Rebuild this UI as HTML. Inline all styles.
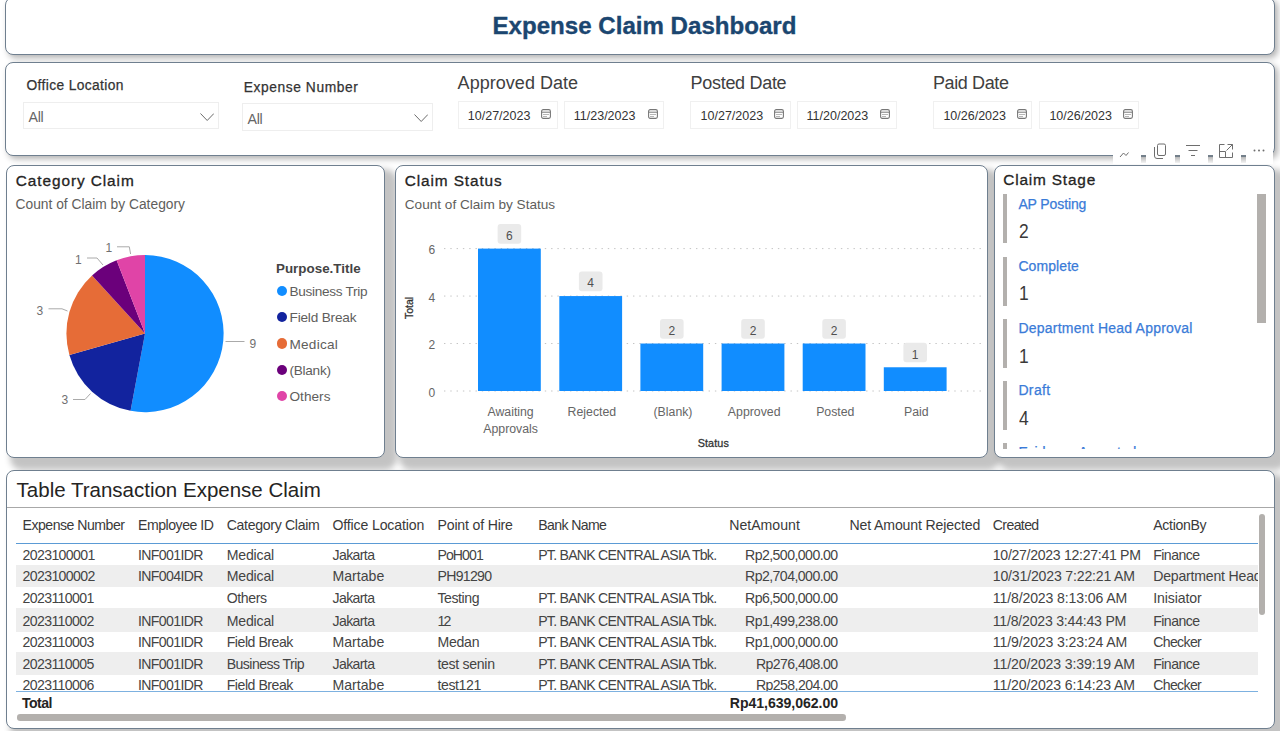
<!DOCTYPE html>
<html><head><meta charset="utf-8">
<style>
*{box-sizing:border-box;margin:0;padding:0}
html,body{width:1280px;height:731px;overflow:hidden;background:#fff;font-family:"Liberation Sans",sans-serif;position:relative}
.p{position:absolute;background:#fff;border:1.5px solid #6f7f8f;border-radius:8px;box-shadow:8px 8px 6px 4px rgba(0,0,0,0.235)}
.t{position:absolute;white-space:nowrap;line-height:1}
</style></head><body>
<div class="p" style="left:4.50px;top:-3.00px;width:1270.05px;height:58.15px;box-shadow:3px 3px 6px rgba(0,0,0,0.30)"></div>
<div class="p" style="left:4.70px;top:62.25px;width:1269.85px;height:94.05px;box-shadow:3px 3px 6px rgba(0,0,0,0.30)"></div>
<div class="p" style="left:5.70px;top:164.55px;width:379.70px;height:293.40px;"></div>
<div class="p" style="left:394.70px;top:164.55px;width:593.50px;height:293.40px;"></div>
<div class="p" style="left:993.70px;top:164.55px;width:281.60px;height:293.40px;"></div>
<div class="p" style="left:5.90px;top:470.15px;width:1269.50px;height:259.30px;"></div>
<div class="t" style="left:492.50px;top:14.00px;font-size:24.1px;color:#1b4670;font-weight:bold;-webkit-text-stroke:0.35px #1b4670;">Expense Claim Dashboard</div>
<div class="t" style="left:26.50px;top:79.00px;font-size:13.8px;color:#333333;font-weight:normal;-webkit-text-stroke:0.25px #333333;letter-spacing:0.371px;">Office Location</div>
<div style="position:absolute;left:23.00px;top:101.60px;width:196.40px;height:27.40px;border:1px solid #eeeeee"></div>
<div class="t" style="left:28.60px;top:110.00px;font-size:14.2px;color:#666666;font-weight:normal;letter-spacing:-0.391px;">All</div>
<div class="t" style="left:243.80px;top:81.00px;font-size:13.8px;color:#333333;font-weight:normal;-webkit-text-stroke:0.25px #333333;letter-spacing:0.568px;">Expense Number</div>
<div style="position:absolute;left:241.60px;top:103.40px;width:191.80px;height:27.20px;border:1px solid #eeeeee"></div>
<div class="t" style="left:247.60px;top:112.00px;font-size:14.2px;color:#666666;font-weight:normal;letter-spacing:-0.391px;">All</div>
<svg style="position:absolute;left:199.8px;top:112.6px" width="14.399999999999977" height="8.0" viewBox="0 0 14.399999999999977 8.0"><path d="M0.5 0.5 L7.199999999999989 7.5 L13.899999999999977 0.5" fill="none" stroke="#6a6a6a" stroke-width="1"/></svg>
<svg style="position:absolute;left:413.8px;top:113.8px" width="14.399999999999977" height="8.0" viewBox="0 0 14.399999999999977 8.0"><path d="M0.5 0.5 L7.199999999999989 7.5 L13.899999999999977 0.5" fill="none" stroke="#6a6a6a" stroke-width="1"/></svg>
<div class="t" style="left:457.60px;top:74.00px;font-size:18px;color:#404040;font-weight:normal;letter-spacing:0.035px;">Approved Date</div>
<div class="t" style="left:690.60px;top:74.00px;font-size:18px;color:#404040;font-weight:normal;letter-spacing:-0.306px;">Posted Date</div>
<div class="t" style="left:933.00px;top:74.00px;font-size:18px;color:#404040;font-weight:normal;letter-spacing:-0.381px;">Paid Date</div>
<div style="position:absolute;left:457.50px;top:101.00px;width:100.30px;height:28.20px;border:1px solid #f0f0f0"></div>
<div class="t" style="left:467.80px;top:110.00px;font-size:12.5px;color:#333333;font-weight:normal;">10/27/2023</div>
<svg style="position:absolute;left:541.3px;top:108.6px" width="10" height="10" viewBox="0 0 10 10"><rect x="0.6" y="0.6" width="8.8" height="8.8" rx="1.6" fill="none" stroke="#777" stroke-width="1.1"/><line x1="0.6" y1="3.2" x2="9.4" y2="3.2" stroke="#777" stroke-width="1"/><rect x="2.4" y="5" width="1.2" height="1" fill="#888"/><rect x="4.4" y="5" width="1.2" height="1" fill="#888"/><rect x="6.4" y="5" width="1.2" height="1" fill="#888"/><rect x="2.4" y="7" width="1.2" height="1" fill="#888"/><rect x="4.4" y="7" width="1.2" height="1" fill="#888"/></svg>
<div style="position:absolute;left:564.00px;top:101.00px;width:99.80px;height:28.20px;border:1px solid #f0f0f0"></div>
<div class="t" style="left:573.80px;top:110.00px;font-size:12.5px;color:#333333;font-weight:normal;">11/23/2023</div>
<svg style="position:absolute;left:647.6px;top:108.6px" width="10" height="10" viewBox="0 0 10 10"><rect x="0.6" y="0.6" width="8.8" height="8.8" rx="1.6" fill="none" stroke="#777" stroke-width="1.1"/><line x1="0.6" y1="3.2" x2="9.4" y2="3.2" stroke="#777" stroke-width="1"/><rect x="2.4" y="5" width="1.2" height="1" fill="#888"/><rect x="4.4" y="5" width="1.2" height="1" fill="#888"/><rect x="6.4" y="5" width="1.2" height="1" fill="#888"/><rect x="2.4" y="7" width="1.2" height="1" fill="#888"/><rect x="4.4" y="7" width="1.2" height="1" fill="#888"/></svg>
<div style="position:absolute;left:690.30px;top:101.00px;width:100.30px;height:28.20px;border:1px solid #f0f0f0"></div>
<div class="t" style="left:700.60px;top:110.00px;font-size:12.5px;color:#333333;font-weight:normal;">10/27/2023</div>
<svg style="position:absolute;left:774px;top:108.6px" width="10" height="10" viewBox="0 0 10 10"><rect x="0.6" y="0.6" width="8.8" height="8.8" rx="1.6" fill="none" stroke="#777" stroke-width="1.1"/><line x1="0.6" y1="3.2" x2="9.4" y2="3.2" stroke="#777" stroke-width="1"/><rect x="2.4" y="5" width="1.2" height="1" fill="#888"/><rect x="4.4" y="5" width="1.2" height="1" fill="#888"/><rect x="6.4" y="5" width="1.2" height="1" fill="#888"/><rect x="2.4" y="7" width="1.2" height="1" fill="#888"/><rect x="4.4" y="7" width="1.2" height="1" fill="#888"/></svg>
<div style="position:absolute;left:796.60px;top:101.00px;width:100.40px;height:28.20px;border:1px solid #f0f0f0"></div>
<div class="t" style="left:806.60px;top:110.00px;font-size:12.5px;color:#333333;font-weight:normal;">11/20/2023</div>
<svg style="position:absolute;left:880px;top:108.6px" width="10" height="10" viewBox="0 0 10 10"><rect x="0.6" y="0.6" width="8.8" height="8.8" rx="1.6" fill="none" stroke="#777" stroke-width="1.1"/><line x1="0.6" y1="3.2" x2="9.4" y2="3.2" stroke="#777" stroke-width="1"/><rect x="2.4" y="5" width="1.2" height="1" fill="#888"/><rect x="4.4" y="5" width="1.2" height="1" fill="#888"/><rect x="6.4" y="5" width="1.2" height="1" fill="#888"/><rect x="2.4" y="7" width="1.2" height="1" fill="#888"/><rect x="4.4" y="7" width="1.2" height="1" fill="#888"/></svg>
<div style="position:absolute;left:932.80px;top:101.00px;width:99.70px;height:28.20px;border:1px solid #f0f0f0"></div>
<div class="t" style="left:943.40px;top:110.00px;font-size:12.5px;color:#333333;font-weight:normal;">10/26/2023</div>
<svg style="position:absolute;left:1017px;top:108.6px" width="10" height="10" viewBox="0 0 10 10"><rect x="0.6" y="0.6" width="8.8" height="8.8" rx="1.6" fill="none" stroke="#777" stroke-width="1.1"/><line x1="0.6" y1="3.2" x2="9.4" y2="3.2" stroke="#777" stroke-width="1"/><rect x="2.4" y="5" width="1.2" height="1" fill="#888"/><rect x="4.4" y="5" width="1.2" height="1" fill="#888"/><rect x="6.4" y="5" width="1.2" height="1" fill="#888"/><rect x="2.4" y="7" width="1.2" height="1" fill="#888"/><rect x="4.4" y="7" width="1.2" height="1" fill="#888"/></svg>
<div style="position:absolute;left:1039.40px;top:101.00px;width:100.00px;height:28.20px;border:1px solid #f0f0f0"></div>
<div class="t" style="left:1049.40px;top:110.00px;font-size:12.5px;color:#333333;font-weight:normal;">10/26/2023</div>
<svg style="position:absolute;left:1123px;top:108.6px" width="10" height="10" viewBox="0 0 10 10"><rect x="0.6" y="0.6" width="8.8" height="8.8" rx="1.6" fill="none" stroke="#777" stroke-width="1.1"/><line x1="0.6" y1="3.2" x2="9.4" y2="3.2" stroke="#777" stroke-width="1"/><rect x="2.4" y="5" width="1.2" height="1" fill="#888"/><rect x="4.4" y="5" width="1.2" height="1" fill="#888"/><rect x="6.4" y="5" width="1.2" height="1" fill="#888"/><rect x="2.4" y="7" width="1.2" height="1" fill="#888"/><rect x="4.4" y="7" width="1.2" height="1" fill="#888"/></svg>
<div style="position:absolute;left:1112.50px;top:138.00px;width:160.70px;height:26.40px;background:#fff"></div>
<div style="position:absolute;left:1141.00px;top:154.80px;width:5.00px;height:2.00px;background:#737f8a"></div>
<div style="position:absolute;left:1141.00px;top:156.80px;width:5.00px;height:6.00px;background:linear-gradient(#b8b8b8,#f4f4f4)"></div>
<div style="position:absolute;left:1174.50px;top:154.80px;width:5.00px;height:2.00px;background:#737f8a"></div>
<div style="position:absolute;left:1174.50px;top:156.80px;width:5.00px;height:6.00px;background:linear-gradient(#b8b8b8,#f4f4f4)"></div>
<div style="position:absolute;left:1207.60px;top:154.80px;width:5.00px;height:2.00px;background:#737f8a"></div>
<div style="position:absolute;left:1207.60px;top:156.80px;width:5.00px;height:6.00px;background:linear-gradient(#b8b8b8,#f4f4f4)"></div>
<div style="position:absolute;left:1240.80px;top:154.80px;width:5.00px;height:2.00px;background:#737f8a"></div>
<div style="position:absolute;left:1240.80px;top:156.80px;width:5.00px;height:6.00px;background:linear-gradient(#b8b8b8,#f4f4f4)"></div>
<svg style="position:absolute;left:1112px;top:140px" width="161" height="22" viewBox="0 0 161 22"><g fill="none" stroke="#6e6e6e" stroke-width="1"><path d="M8 17 L11.5 13 L14 15.5 L16.5 12.5"/><rect x="45.5" y="4" width="8" height="11.5" rx="1.5"/><path d="M42.5 7 V16 Q42.5 18.5 45 18.5 H51"/><path d="M74 5.5 H88 M76.5 10.5 H85.5 M79 15.5 H83"/><path d="M112.5 4.5 H107.5 V17.5 H120.5 V12.5"/><path d="M107.5 11.5 H113.5 V17.5"/><path d="M115.5 4.5 H120.5 V9.5 M120.5 4.5 L114.5 10.5"/></g><circle cx="142.5" cy="10.5" r="1" fill="#6e6e6e"/><circle cx="147" cy="10.5" r="1" fill="#6e6e6e"/><circle cx="151.5" cy="10.5" r="1" fill="#6e6e6e"/></svg>
<div class="t" style="left:15.80px;top:173.00px;font-size:15.4px;color:#252423;font-weight:normal;-webkit-text-stroke:0.3px #252423;letter-spacing:0.914px;">Category Claim</div>
<div class="t" style="left:15.50px;top:198.00px;font-size:13.8px;color:#605e5c;font-weight:normal;">Count of Claim by Category</div>
<svg style="position:absolute;left:0;top:0" width="400" height="460" viewBox="0 0 400 460"><path d="M145 333.6 L145.00 255.00 A78.6 78.6 0 1 1 130.56 410.86 Z" fill="#118DFF"/><path d="M145 333.6 L130.56 410.86 A78.6 78.6 0 0 1 69.40 355.11 Z" fill="#12239E"/><path d="M145 333.6 L69.40 355.11 A78.6 78.6 0 0 1 92.05 275.51 Z" fill="#E66C37"/><path d="M145 333.6 L92.05 275.51 A78.6 78.6 0 0 1 116.61 260.31 Z" fill="#6B007B"/><path d="M145 333.6 L116.61 260.31 A78.6 78.6 0 0 1 145.00 255.00 Z" fill="#E044A7"/><g fill="none" stroke="#aaaaaa" stroke-width="1"><path d="M225.5 341.5 H244.5"/><path d="M73 399.5 H85 L90.5 393.5"/><path d="M48.5 308.8 H62 L67.5 311"/><path d="M87 258 H97 L103 265"/><path d="M117 246.8 H129.3 L130.6 254"/></g></svg>
<div class="t" style="left:249.50px;top:338.00px;font-size:12px;color:#707070;font-weight:normal;">9</div>
<div class="t" style="left:61.50px;top:394.00px;font-size:12px;color:#707070;font-weight:normal;">3</div>
<div class="t" style="left:36.50px;top:305.00px;font-size:12px;color:#707070;font-weight:normal;">3</div>
<div class="t" style="left:75.00px;top:254.00px;font-size:12px;color:#707070;font-weight:normal;">1</div>
<div class="t" style="left:105.50px;top:242.00px;font-size:12px;color:#707070;font-weight:normal;">1</div>
<div class="t" style="left:276.00px;top:262.00px;font-size:13.4px;color:#444444;font-weight:bold;">Purpose.Title</div>
<div style="position:absolute;left:276.5px;top:285.80px;width:10.4px;height:10.4px;border-radius:50%;background:#118DFF"></div>
<div class="t" style="left:289.50px;top:285.00px;font-size:13.6px;color:#605e5c;font-weight:normal;letter-spacing:-0.303px;">Business Trip</div>
<div style="position:absolute;left:276.5px;top:312.10px;width:10.4px;height:10.4px;border-radius:50%;background:#12239E"></div>
<div class="t" style="left:289.50px;top:311.00px;font-size:13.6px;color:#605e5c;font-weight:normal;letter-spacing:-0.178px;">Field Break</div>
<div style="position:absolute;left:276.5px;top:338.40px;width:10.4px;height:10.4px;border-radius:50%;background:#E66C37"></div>
<div class="t" style="left:289.50px;top:338.00px;font-size:13.6px;color:#605e5c;font-weight:normal;letter-spacing:0.239px;">Medical</div>
<div style="position:absolute;left:276.5px;top:364.70px;width:10.4px;height:10.4px;border-radius:50%;background:#6B007B"></div>
<div class="t" style="left:289.50px;top:364.00px;font-size:13.6px;color:#605e5c;font-weight:normal;letter-spacing:-0.263px;">(Blank)</div>
<div style="position:absolute;left:276.5px;top:391.00px;width:10.4px;height:10.4px;border-radius:50%;background:#E044A7"></div>
<div class="t" style="left:289.50px;top:390.00px;font-size:13.6px;color:#605e5c;font-weight:normal;letter-spacing:0.037px;">Others</div>
<div class="t" style="left:404.80px;top:173.00px;font-size:15.4px;color:#252423;font-weight:normal;-webkit-text-stroke:0.3px #252423;letter-spacing:0.882px;">Claim Status</div>
<div class="t" style="left:404.80px;top:198.00px;font-size:13.6px;color:#605e5c;font-weight:normal;">Count of Claim by Status</div>
<svg style="position:absolute;left:0;top:0" width="1000" height="460" viewBox="0 0 1000 460"><line x1="444" y1="391.00" x2="983" y2="391.00" stroke="#c4c4c4" stroke-width="1" stroke-dasharray="1.4 4.9"/><line x1="444" y1="343.53" x2="983" y2="343.53" stroke="#c4c4c4" stroke-width="1" stroke-dasharray="1.4 4.9"/><line x1="444" y1="296.07" x2="983" y2="296.07" stroke="#c4c4c4" stroke-width="1" stroke-dasharray="1.4 4.9"/><line x1="444" y1="248.60" x2="983" y2="248.60" stroke="#c4c4c4" stroke-width="1" stroke-dasharray="1.4 4.9"/><rect x="478" y="248.60" width="62.8" height="142.40" fill="#118DFF"/><rect x="497.60" y="224.10" width="23.6" height="19.6" rx="3" fill="#eaeaea"/><rect x="559.3" y="296.07" width="62.8" height="94.93" fill="#118DFF"/><rect x="578.90" y="271.57" width="23.6" height="19.6" rx="3" fill="#eaeaea"/><rect x="640.4" y="343.53" width="62.8" height="47.47" fill="#118DFF"/><rect x="660.00" y="319.03" width="23.6" height="19.6" rx="3" fill="#eaeaea"/><rect x="721.6" y="343.53" width="62.8" height="47.47" fill="#118DFF"/><rect x="741.20" y="319.03" width="23.6" height="19.6" rx="3" fill="#eaeaea"/><rect x="802.7" y="343.53" width="62.8" height="47.47" fill="#118DFF"/><rect x="822.30" y="319.03" width="23.6" height="19.6" rx="3" fill="#eaeaea"/><rect x="883.8" y="367.27" width="62.8" height="23.73" fill="#118DFF"/><rect x="903.40" y="342.77" width="23.6" height="19.6" rx="3" fill="#eaeaea"/></svg>
<div class="t" style="left:359.40px;width:300px;text-align:center;top:230.00px;font-size:12px;color:#505050;font-weight:normal;">6</div>
<div class="t" style="left:440.70px;width:300px;text-align:center;top:277.00px;font-size:12px;color:#505050;font-weight:normal;">4</div>
<div class="t" style="left:521.80px;width:300px;text-align:center;top:325.00px;font-size:12px;color:#505050;font-weight:normal;">2</div>
<div class="t" style="left:603.00px;width:300px;text-align:center;top:325.00px;font-size:12px;color:#505050;font-weight:normal;">2</div>
<div class="t" style="left:684.10px;width:300px;text-align:center;top:325.00px;font-size:12px;color:#505050;font-weight:normal;">2</div>
<div class="t" style="left:765.20px;width:300px;text-align:center;top:349.00px;font-size:12px;color:#505050;font-weight:normal;">1</div>
<div class="t" style="left:428.50px;top:387.00px;font-size:12px;color:#666666;font-weight:normal;">0</div>
<div class="t" style="left:428.50px;top:339.00px;font-size:12px;color:#666666;font-weight:normal;">2</div>
<div class="t" style="left:428.50px;top:292.00px;font-size:12px;color:#666666;font-weight:normal;">4</div>
<div class="t" style="left:428.50px;top:244.00px;font-size:12px;color:#666666;font-weight:normal;">6</div>
<div class="t" style="left:380px;top:302px;width:60px;text-align:center;font-size:10.5px;color:#333;-webkit-text-stroke:0.3px #333;transform:rotate(-90deg);transform-origin:30px 6px">Total</div>
<div class="t" style="left:360.60px;width:300px;text-align:center;top:406.00px;font-size:12.3px;color:#666666;font-weight:normal;">Awaiting</div>
<div class="t" style="left:441.90px;width:300px;text-align:center;top:406.00px;font-size:12.3px;color:#666666;font-weight:normal;">Rejected</div>
<div class="t" style="left:523.00px;width:300px;text-align:center;top:406.00px;font-size:12.3px;color:#666666;font-weight:normal;">(Blank)</div>
<div class="t" style="left:604.20px;width:300px;text-align:center;top:406.00px;font-size:12.3px;color:#666666;font-weight:normal;">Approved</div>
<div class="t" style="left:685.30px;width:300px;text-align:center;top:406.00px;font-size:12.3px;color:#666666;font-weight:normal;">Posted</div>
<div class="t" style="left:766.40px;width:300px;text-align:center;top:406.00px;font-size:12.3px;color:#666666;font-weight:normal;">Paid</div>
<div class="t" style="left:360.60px;width:300px;text-align:center;top:423.00px;font-size:12.3px;color:#666666;font-weight:normal;">Approvals</div>
<div class="t" style="left:563.30px;width:300px;text-align:center;top:438.00px;font-size:10.8px;color:#333333;font-weight:normal;-webkit-text-stroke:0.3px #333333;letter-spacing:0.116px;">Status</div>
<div class="t" style="left:1003.30px;top:172.00px;font-size:15.4px;color:#252423;font-weight:normal;-webkit-text-stroke:0.3px #252423;letter-spacing:0.812px;">Claim Stage</div>
<div style="position:absolute;left:1257.20px;top:194.00px;width:8.40px;height:129.00px;background:#b3b0ad"></div>
<div style="position:absolute;left:995px;top:190px;width:260px;height:258.5px;overflow:hidden">
<div style="position:absolute;left:8px;top:4.40px;width:4.3px;height:49px;background:#b3b0ad"></div>
<div class="t" style="left:23.4px;top:7px;font-size:14.0px;color:#3a7bd8;-webkit-text-stroke:0.25px #3a7bd8;letter-spacing:-0.112px">AP Posting</div>
<div class="t" style="left:23.6px;top:32px;font-size:19.8px;color:#3a3938;transform:scaleX(0.88);transform-origin:0 0">2</div>
<div style="position:absolute;left:8px;top:66.50px;width:4.3px;height:49px;background:#b3b0ad"></div>
<div class="t" style="left:23.4px;top:69px;font-size:14.0px;color:#3a7bd8;-webkit-text-stroke:0.25px #3a7bd8;letter-spacing:0.083px">Complete</div>
<div class="t" style="left:23.6px;top:94px;font-size:19.8px;color:#3a3938;transform:scaleX(0.88);transform-origin:0 0">1</div>
<div style="position:absolute;left:8px;top:128.60px;width:4.3px;height:49px;background:#b3b0ad"></div>
<div class="t" style="left:23.4px;top:131px;font-size:14.0px;color:#3a7bd8;-webkit-text-stroke:0.25px #3a7bd8;letter-spacing:0.223px">Department Head Approval</div>
<div class="t" style="left:23.6px;top:157px;font-size:19.8px;color:#3a3938;transform:scaleX(0.88);transform-origin:0 0">1</div>
<div style="position:absolute;left:8px;top:190.70px;width:4.3px;height:49px;background:#b3b0ad"></div>
<div class="t" style="left:23.4px;top:193px;font-size:14.0px;color:#3a7bd8;-webkit-text-stroke:0.25px #3a7bd8;letter-spacing:0.365px">Draft</div>
<div class="t" style="left:23.6px;top:219px;font-size:19.8px;color:#3a3938;transform:scaleX(0.88);transform-origin:0 0">4</div>
<div style="position:absolute;left:8px;top:252.80px;width:4.3px;height:49px;background:#b3b0ad"></div>
<div class="t" style="left:23.4px;top:255px;font-size:14.0px;color:#3a7bd8;-webkit-text-stroke:0.25px #3a7bd8;letter-spacing:-0.068px">Evidence Accepted</div>
<div class="t" style="left:23.6px;top:281px;font-size:19.8px;color:#3a3938;transform:scaleX(0.88);transform-origin:0 0">1</div>
</div>
<div class="t" style="left:16.60px;top:480.00px;font-size:20.5px;color:#252423;font-weight:normal;">Table Transaction Expense Claim</div>
<div style="position:absolute;left:6.80px;top:507.00px;width:1267.60px;height:1.10px;background:#a8a8a8"></div>
<div class="t" style="left:22.50px;top:518.00px;font-size:14.1px;color:#3a3a3a;font-weight:normal;letter-spacing:-0.495px;">Expense Number</div>
<div class="t" style="left:138.00px;top:518.00px;font-size:14.1px;color:#3a3a3a;font-weight:normal;letter-spacing:-0.472px;">Employee ID</div>
<div class="t" style="left:226.70px;top:518.00px;font-size:14.1px;color:#3a3a3a;font-weight:normal;letter-spacing:-0.313px;">Category Claim</div>
<div class="t" style="left:332.50px;top:518.00px;font-size:14.1px;color:#3a3a3a;font-weight:normal;letter-spacing:-0.143px;">Office Location</div>
<div class="t" style="left:437.50px;top:518.00px;font-size:14.1px;color:#3a3a3a;font-weight:normal;letter-spacing:-0.174px;">Point of Hire</div>
<div class="t" style="left:538.20px;top:518.00px;font-size:14.1px;color:#3a3a3a;font-weight:normal;letter-spacing:-0.608px;">Bank Name</div>
<div class="t" style="left:729.20px;top:518.00px;font-size:14.1px;color:#3a3a3a;font-weight:normal;letter-spacing:0.021px;">NetAmount</div>
<div class="t" style="left:849.50px;top:518.00px;font-size:14.1px;color:#3a3a3a;font-weight:normal;letter-spacing:-0.136px;">Net Amount Rejected</div>
<div class="t" style="left:992.80px;top:518.00px;font-size:14.1px;color:#3a3a3a;font-weight:normal;letter-spacing:-0.627px;">Created</div>
<div class="t" style="left:1153.20px;top:518.00px;font-size:14.1px;color:#3a3a3a;font-weight:normal;letter-spacing:-0.306px;">ActionBy</div>
<div style="position:absolute;left:0;top:543px;width:1258px;height:148px;overflow:hidden">
<div class="t" style="left:22.50px;top:5px;font-size:14.1px;color:#444444;letter-spacing:-0.618px;">2023100001</div>
<div class="t" style="left:138.00px;top:5px;font-size:14.1px;color:#444444;letter-spacing:-0.625px;">INF001IDR</div>
<div class="t" style="left:226.70px;top:5px;font-size:14.1px;color:#444444;letter-spacing:-0.181px;">Medical</div>
<div class="t" style="left:332.50px;top:5px;font-size:14.1px;color:#444444;letter-spacing:-0.623px;">Jakarta</div>
<div class="t" style="left:437.50px;top:5px;font-size:14.1px;color:#444444;letter-spacing:-0.941px;">PoH001</div>
<div class="t" style="left:538.20px;top:5px;font-size:14.1px;color:#444444;letter-spacing:-0.739px;">PT. BANK CENTRAL ASIA Tbk.</div>
<div class="t" style="right:420.35px;top:5px;font-size:14.1px;color:#444444;letter-spacing:-0.547px">Rp2,500,000.00</div>
<div class="t" style="left:992.80px;top:5px;font-size:14.1px;color:#444444;letter-spacing:-0.297px;">10/27/2023 12:27:41 PM</div>
<div class="t" style="left:1153.20px;top:5px;font-size:14.1px;color:#444444;letter-spacing:-0.544px;">Finance</div>
<div style="position:absolute;left:16px;top:22.00px;width:1242px;height:21.90px;background:#eeeeee"></div>
<div class="t" style="left:22.50px;top:26px;font-size:14.1px;color:#444444;letter-spacing:-0.618px;">2023100002</div>
<div class="t" style="left:138.00px;top:26px;font-size:14.1px;color:#444444;letter-spacing:-0.625px;">INF004IDR</div>
<div class="t" style="left:226.70px;top:26px;font-size:14.1px;color:#444444;letter-spacing:-0.181px;">Medical</div>
<div class="t" style="left:332.50px;top:26px;font-size:14.1px;color:#444444;letter-spacing:0.004px;">Martabe</div>
<div class="t" style="left:437.50px;top:26px;font-size:14.1px;color:#444444;letter-spacing:-0.716px;">PH91290</div>
<div class="t" style="right:420.35px;top:26px;font-size:14.1px;color:#444444;letter-spacing:-0.547px">Rp2,704,000.00</div>
<div class="t" style="left:992.80px;top:26px;font-size:14.1px;color:#444444;letter-spacing:-0.176px;">10/31/2023 7:22:21 AM</div>
<div class="t" style="left:1153.20px;top:26px;font-size:14.1px;color:#444444;letter-spacing:-0.199px;">Department Head</div>
<div class="t" style="left:22.50px;top:48px;font-size:14.1px;color:#444444;letter-spacing:-0.610px;">2023110001</div>
<div class="t" style="left:226.70px;top:48px;font-size:14.1px;color:#444444;letter-spacing:-0.363px;">Others</div>
<div class="t" style="left:332.50px;top:48px;font-size:14.1px;color:#444444;letter-spacing:-0.623px;">Jakarta</div>
<div class="t" style="left:437.50px;top:48px;font-size:14.1px;color:#444444;letter-spacing:-0.446px;">Testing</div>
<div class="t" style="left:538.20px;top:48px;font-size:14.1px;color:#444444;letter-spacing:-0.739px;">PT. BANK CENTRAL ASIA Tbk.</div>
<div class="t" style="right:420.35px;top:48px;font-size:14.1px;color:#444444;letter-spacing:-0.547px">Rp6,500,000.00</div>
<div class="t" style="left:992.80px;top:48px;font-size:14.1px;color:#444444;letter-spacing:-0.133px;">11/8/2023 8:13:06 AM</div>
<div class="t" style="left:1153.20px;top:48px;font-size:14.1px;color:#444444;letter-spacing:-0.096px;">Inisiator</div>
<div style="position:absolute;left:16px;top:65.20px;width:1242px;height:23.50px;background:#eeeeee"></div>
<div class="t" style="left:22.50px;top:71px;font-size:14.1px;color:#444444;letter-spacing:-0.610px;">2023110002</div>
<div class="t" style="left:138.00px;top:71px;font-size:14.1px;color:#444444;letter-spacing:-0.625px;">INF001IDR</div>
<div class="t" style="left:226.70px;top:71px;font-size:14.1px;color:#444444;letter-spacing:-0.181px;">Medical</div>
<div class="t" style="left:332.50px;top:71px;font-size:14.1px;color:#444444;letter-spacing:-0.623px;">Jakarta</div>
<div class="t" style="left:437.50px;top:71px;font-size:14.1px;color:#444444;letter-spacing:-1.934px;">12</div>
<div class="t" style="left:538.20px;top:71px;font-size:14.1px;color:#444444;letter-spacing:-0.739px;">PT. BANK CENTRAL ASIA Tbk.</div>
<div class="t" style="right:420.35px;top:71px;font-size:14.1px;color:#444444;letter-spacing:-0.547px">Rp1,499,238.00</div>
<div class="t" style="left:992.80px;top:71px;font-size:14.1px;color:#444444;letter-spacing:-0.216px;">11/8/2023 3:44:43 PM</div>
<div class="t" style="left:1153.20px;top:71px;font-size:14.1px;color:#444444;letter-spacing:-0.544px;">Finance</div>
<div class="t" style="left:22.50px;top:92px;font-size:14.1px;color:#444444;letter-spacing:-0.610px;">2023110003</div>
<div class="t" style="left:138.00px;top:92px;font-size:14.1px;color:#444444;letter-spacing:-0.625px;">INF001IDR</div>
<div class="t" style="left:226.70px;top:92px;font-size:14.1px;color:#444444;letter-spacing:-0.456px;">Field Break</div>
<div class="t" style="left:332.50px;top:92px;font-size:14.1px;color:#444444;letter-spacing:0.004px;">Martabe</div>
<div class="t" style="left:437.50px;top:92px;font-size:14.1px;color:#444444;letter-spacing:-0.278px;">Medan</div>
<div class="t" style="left:538.20px;top:92px;font-size:14.1px;color:#444444;letter-spacing:-0.739px;">PT. BANK CENTRAL ASIA Tbk.</div>
<div class="t" style="right:420.35px;top:92px;font-size:14.1px;color:#444444;letter-spacing:-0.547px">Rp1,000,000.00</div>
<div class="t" style="left:992.80px;top:92px;font-size:14.1px;color:#444444;letter-spacing:-0.133px;">11/9/2023 3:23:24 AM</div>
<div class="t" style="left:1153.20px;top:92px;font-size:14.1px;color:#444444;letter-spacing:-0.651px;">Checker</div>
<div style="position:absolute;left:16px;top:109.40px;width:1242px;height:22.30px;background:#eeeeee"></div>
<div class="t" style="left:22.50px;top:114px;font-size:14.1px;color:#444444;letter-spacing:-0.610px;">2023110005</div>
<div class="t" style="left:138.00px;top:114px;font-size:14.1px;color:#444444;letter-spacing:-0.625px;">INF001IDR</div>
<div class="t" style="left:226.70px;top:114px;font-size:14.1px;color:#444444;letter-spacing:-0.553px;">Business Trip</div>
<div class="t" style="left:332.50px;top:114px;font-size:14.1px;color:#444444;letter-spacing:-0.623px;">Jakarta</div>
<div class="t" style="left:437.50px;top:114px;font-size:14.1px;color:#444444;letter-spacing:-0.317px;">test senin</div>
<div class="t" style="left:538.20px;top:114px;font-size:14.1px;color:#444444;letter-spacing:-0.739px;">PT. BANK CENTRAL ASIA Tbk.</div>
<div class="t" style="right:420.37px;top:114px;font-size:14.1px;color:#444444;letter-spacing:-0.571px">Rp276,408.00</div>
<div class="t" style="left:992.80px;top:114px;font-size:14.1px;color:#444444;letter-spacing:-0.124px;">11/20/2023 3:39:19 AM</div>
<div class="t" style="left:1153.20px;top:114px;font-size:14.1px;color:#444444;letter-spacing:-0.544px;">Finance</div>
<div class="t" style="left:22.50px;top:135px;font-size:14.1px;color:#444444;letter-spacing:-0.610px;">2023110006</div>
<div class="t" style="left:138.00px;top:135px;font-size:14.1px;color:#444444;letter-spacing:-0.625px;">INF001IDR</div>
<div class="t" style="left:226.70px;top:135px;font-size:14.1px;color:#444444;letter-spacing:-0.456px;">Field Break</div>
<div class="t" style="left:332.50px;top:135px;font-size:14.1px;color:#444444;letter-spacing:0.004px;">Martabe</div>
<div class="t" style="left:437.50px;top:135px;font-size:14.1px;color:#444444;letter-spacing:-0.417px;">test121</div>
<div class="t" style="left:538.20px;top:135px;font-size:14.1px;color:#444444;letter-spacing:-0.739px;">PT. BANK CENTRAL ASIA Tbk.</div>
<div class="t" style="right:420.37px;top:135px;font-size:14.1px;color:#444444;letter-spacing:-0.571px">Rp258,204.00</div>
<div class="t" style="left:992.80px;top:135px;font-size:14.1px;color:#444444;letter-spacing:-0.124px;">11/20/2023 6:14:23 AM</div>
<div class="t" style="left:1153.20px;top:135px;font-size:14.1px;color:#444444;letter-spacing:-0.651px;">Checker</div>
</div>
<div style="position:absolute;left:16.00px;top:543.00px;width:1242.00px;height:1.20px;background:#5b9bd5"></div>
<div style="position:absolute;left:16.00px;top:690.80px;width:1242.00px;height:1.60px;background:#7db1e0"></div>
<div class="t" style="left:22.00px;top:696.00px;font-size:14.1px;color:#252423;font-weight:bold;letter-spacing:-0.579px;">Total</div>
<div class="t" style="right:442.05px;top:696.00px;font-size:14.1px;color:#252423;font-weight:bold;text-align:right;letter-spacing:-0.055px;">Rp41,639,062.00</div>
<div style="position:absolute;left:17.00px;top:714.20px;width:829.40px;height:6.40px;background:#b3b0ad;border-radius:3.2px"></div>
<div style="position:absolute;left:1259.40px;top:514.00px;width:6.00px;height:101.00px;background:#b3b0ad;border-radius:3px"></div>
</body></html>
